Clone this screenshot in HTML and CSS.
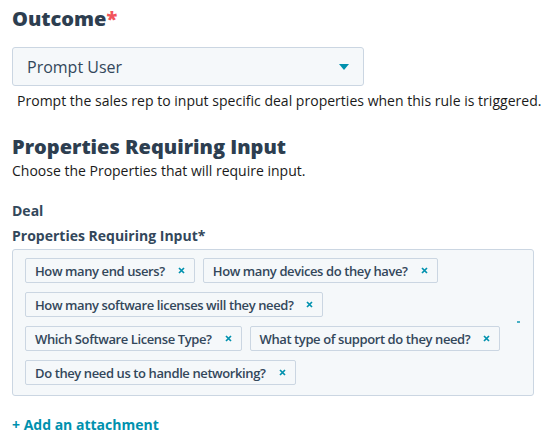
FILE: index.html
```html
<!DOCTYPE html>
<html>
<head>
<meta charset="utf-8">
<link rel="stylesheet" href="styles.css">
</head>
<body>
<div class="page">
  <h2 class="title">Outcome<span class="req">*</span></h2>
  <div class="select">
    <span>Prompt User</span>
    <svg class="caret" width="10" height="6" viewBox="0 0 10 6"><path d="M0 0h10L5 6z" fill="#0091ae"/></svg>
  </div>
  <p class="help">Prompt the sales rep to input specific deal properties when this rule is triggered.</p>

  <h2 class="title title2">Properties Requiring Input</h2>
  <p class="desc">Choose the Properties that will require input.</p>
  <div class="label deal">Deal</div>
  <div class="label">Properties Requiring Input*</div>
  <div class="tagbox">
    <span class="tag">How many end users?<svg class="x" width="7" height="7" viewBox="0 0 7 7"><path d="M1 1l5 5M6 1L1 6"/></svg></span>
    <span class="tag">How many devices do they have?<svg class="x" width="7" height="7" viewBox="0 0 7 7"><path d="M1 1l5 5M6 1L1 6"/></svg></span>
    <span class="tag">How many software licenses will they need?<svg class="x" width="7" height="7" viewBox="0 0 7 7"><path d="M1 1l5 5M6 1L1 6"/></svg></span>
    <span class="tag">Which Software License Type?<svg class="x" width="7" height="7" viewBox="0 0 7 7"><path d="M1 1l5 5M6 1L1 6"/></svg></span>
    <span class="tag">What type of support do they need?<svg class="x" width="7" height="7" viewBox="0 0 7 7"><path d="M1 1l5 5M6 1L1 6"/></svg></span>
    <span class="tag">Do they need us to handle networking?<svg class="x" width="7" height="7" viewBox="0 0 7 7"><path d="M1 1l5 5M6 1L1 6"/></svg></span>
    <span class="dot"></span>
  </div>
  <a class="add" href="#">+ Add an attachment</a>
</div>
</body>
</html>
```
FILE: styles.css
```css
* { box-sizing: border-box; }
body {
  margin: 0;
  font-family: "Open Sans", "Noto Sans", sans-serif;
  color: #33475b;
  background: #fff;
}
.page {
  padding: 6px 12px 0 12px;
  display: flex;
  flex-direction: column;
  align-items: flex-start;
}
.title {
  margin: 0;
  font-size: 20px;
  font-weight: 800;
  line-height: 26px;
  color: #2d3e50;
}
.req { color: #f2545b; }
.select {
  margin-top: 15px;
  width: 352px;
  height: 39px;
  border: 1px solid #cbd6e2;
  border-radius: 3px;
  background: #f5f8fa;
  display: flex;
  align-items: center;
  justify-content: space-between;
  padding: 0 14px 0 14px;
  font-size: 16px;
  color: #33475b;
}
.help {
  margin: 6px 0 0 5px;
  font-size: 14px;
  line-height: 18px;
  color: #1a1a1a;
  white-space: nowrap;
  letter-spacing: 0.02px;
}
.title2 { margin-top: 24px; }
.desc {
  margin: 2px 0 0 0;
  font-size: 14px;
  line-height: 18px;
  color: #1a1a1a;
}
.label {
  font-size: 14px;
  font-weight: 700;
  line-height: 18px;
  color: #33475b;
}
.deal { margin-top: 22px; }
.label + .label { margin-top: 7px; }
.tagbox {
  position: relative;
  margin-top: 4px;
  width: 522px;
  border: 1px solid #cbd6e2;
  border-radius: 3px;
  background: #f5f8fa;
  padding: 8px 12px 10px 12px;
  display: flex;
  flex-wrap: wrap;
  gap: 9px 8px;
}
.tag {
  height: 25px;
  display: inline-flex;
  align-items: center;
  padding: 0 9px 0 9px;
  border: 1px solid #cbd6e2;
  border-radius: 2px;
  background: #f5f8fa;
  font-size: 13px;
  font-weight: 600;
  letter-spacing: -0.4px;
  color: #33475b;
}
.x {
  margin-left: 13px;
  stroke: #0091ae;
  stroke-width: 1.7;
  fill: none;
}
.dot {
  position: absolute;
  right: 13px;
  top: 71px;
  width: 3px;
  height: 2px;
  background: #0091ae;
  opacity: 0.7;
}
.add {
  margin-top: 19px;
  font-size: 14px;
  font-weight: 700;
  color: #0091ae;
  text-decoration: none;
}
```
